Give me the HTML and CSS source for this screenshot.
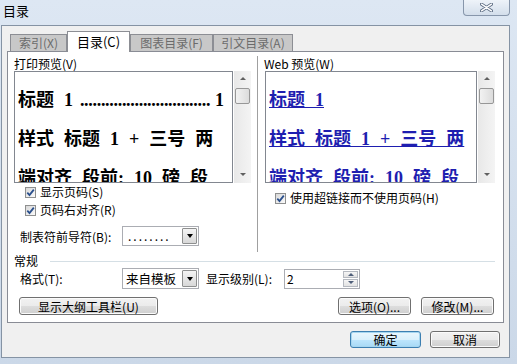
FILE: index.html
```html
<!DOCTYPE html>
<html lang="zh-CN">
<head>
    <meta charset="UTF-8">
    <title>目录</title>
    <link rel="stylesheet" href="styles.css">
</head>
<body>

<div class="window">
    <div class="titlebar">
        <span class="title">目录</span>
        <div class="close-btn">
            <svg width="13" height="9" viewBox="0 0 13 9">
                <path d="M1.5 1.2 L11.5 7.8 M11.5 1.2 L1.5 7.8" stroke="#5b6b82" stroke-width="3.2" stroke-linecap="round"/>
                <path d="M1.5 1.2 L11.5 7.8 M11.5 1.2 L1.5 7.8" stroke="#fff" stroke-width="1.5" stroke-linecap="round"/>
            </svg>
        </div>
    </div>

    <div class="client">
        <div class="tabs">
            <div class="tab tab-index">索引(X)</div>
            <div class="tab tab-toc active">目录(C)</div>
            <div class="tab tab-figures">图表目录(F)</div>
            <div class="tab tab-cites">引文目录(A)</div>
        </div>

        <div class="tab-page">
            <div class="previews">
                <!-- 打印预览 -->
                <div class="preview-col print-col">
                    <div class="label">打印预览(V)</div>
                    <div class="preview-box">
                        <div class="preview-text">
                            <div class="toc-line"><span>标题 1</span><span class="dots">...............................</span><span>1</span></div>
                            <div>样式 标题 1 + 三号 两</div>
                            <div>端对齐 段前: 10 磅 段</div>
                        </div>
                        <div class="scrollbar">
                            <span class="arrow-up"></span>
                            <span class="thumb"></span>
                            <span class="arrow-down"></span>
                        </div>
                    </div>
                    <div class="check"><span class="check-box"><svg width="9" height="9" viewBox="0 0 9 9"><path d="M1.3 4.6 L3.5 7 L7.8 1.6" fill="none" stroke="#2a4f8c" stroke-width="1.8"/></svg></span>显示页码(S)</div>
                    <div class="check"><span class="check-box"><svg width="9" height="9" viewBox="0 0 9 9"><path d="M1.3 4.6 L3.5 7 L7.8 1.6" fill="none" stroke="#2a4f8c" stroke-width="1.8"/></svg></span>页码右对齐(R)</div>
                    <div class="field-row leader-row">
                        <span class="field-label">制表符前导符(B):</span>
                        <div class="combo"><span class="combo-value leader-dots">........</span><span class="drop-btn"></span></div>
                    </div>
                </div>

                <div class="vsep"></div>

                <!-- Web 预览 -->
                <div class="preview-col web-col">
                    <div class="label">Web 预览(W)</div>
                    <div class="preview-box">
                        <div class="preview-text web-text">
                            <div><a>标题 1</a></div>
                            <div><a>样式 标题 1 + 三号 两</a></div>
                            <div><a>端对齐 段前: 10 磅 段</a></div>
                        </div>
                        <div class="scrollbar">
                            <span class="arrow-up"></span>
                            <span class="thumb"></span>
                            <span class="arrow-down"></span>
                        </div>
                    </div>
                    <div class="check"><span class="check-box"><svg width="9" height="9" viewBox="0 0 9 9"><path d="M1.3 4.6 L3.5 7 L7.8 1.6" fill="none" stroke="#2a4f8c" stroke-width="1.8"/></svg></span>使用超链接而不使用页码(H)</div>
                </div>
            </div>

            <!-- 常规 -->
            <div class="group-title"><span>常规</span><span class="group-line"></span></div>
            <div class="field-row format-row">
                <span class="field-label">格式(T):</span>
                <div class="combo"><span class="combo-value">来自模板</span><span class="drop-btn"></span></div>
                <span class="level-label">显示级别(L):</span>
                <div class="spin">
                    <span class="spin-value">2</span>
                    <span class="spin-btns"><span class="spin-up"></span><span class="spin-down"></span></span>
                </div>
            </div>
            <div class="button-row">
                <button class="btn outline-btn">显示大纲工具栏(U)</button>
                <span class="spacer"></span>
                <button class="btn small-btn">选项(O)...</button>
                <button class="btn small-btn">修改(M)...</button>
            </div>
        </div>

        <div class="dialog-buttons">
            <button class="btn dialog-btn default">确定</button>
            <button class="btn dialog-btn">取消</button>
        </div>
    </div>
</div>

</body>
</html>
```

FILE: styles.css
```css
/* Alap */
* {
    box-sizing: border-box;
}

body {
    margin: 0;
    font-family: "Noto Sans CJK SC", sans-serif;
    font-size: 12px;
    color: #000;
}

.window {
    width: 517px;
    height: 364px;
    background: linear-gradient(#dde7f3, #cbd8e8);
    display: flex;
    flex-direction: column;
    overflow: hidden;
}

/* Címsor */
.titlebar {
    height: 25px;
    display: flex;
    justify-content: space-between;
    align-items: flex-start;
}

.title {
    font-size: 13px;
    line-height: 14px;
    margin: 4px 0 0 3px;
}

.close-btn {
    width: 47px;
    height: 16px;
    margin-right: 7px;
    border: 1px solid #8796ab;
    border-top: none;
    border-radius: 0 0 4px 4px;
    background: linear-gradient(#eef3f9, #d3deeb);
    display: flex;
    align-items: center;
    justify-content: center;
}

/* Kliens terület */
.client {
    margin: 0 7px 0 1px;
    height: 333px;
    border: 1px solid #8593a4;
    background: #f0f0f0;
    padding-top: 5px;
    display: flex;
    flex-direction: column;
}

.tabs {
    display: flex;
    align-items: flex-end;
    height: 20px;
    margin-left: 8px;
}

.tab {
    height: 17px;
    border: 1px solid #8c8e94;
    border-bottom: none;
    background: #c8c8c8;
    color: #6b6b6b;
    line-height: 15px;
    text-align: center;
}

.tab-index { width: 57px; }
.tab-toc { width: 63px; }
.tab-figures { width: 83px; }
.tab-cites { width: 80px; }

.tab.active {
    height: 21px;
    margin-bottom: -1px;
    background: #fff;
    color: #000;
    font-size: 13px;
    line-height: 19px;
    position: relative;
}

.tab-page {
    margin: 0 5px;
    height: 272px;
    border: 1px solid #898c95;
    background: #fff;
    display: flex;
    flex-direction: column;
}

/* Előnézetek */
.previews {
    display: flex;
    height: 202px;
    padding: 4px 8px 0 6px;
}

.print-col {
    width: 237px;
}

.web-col {
    width: 231px;
}

.vsep {
    width: 1px;
    margin: 0 6px 2px 6px;
    background: #a0a0a0;
}

.label {
    height: 15px;
    line-height: 15px;
}

.preview-box {
    display: flex;
    height: 112px;
}

.web-col .preview-box {
    margin-left: 1px;
}

.preview-text {
    flex: 1;
    border: 1px solid #828790;
    background: #fff;
    overflow: hidden;
    padding: 9px 8px 0 3px;
    font-family: "Liberation Serif", "Noto Sans CJK SC", serif;
    font-weight: bold;
    font-size: 18px;
    line-height: 39px;
    white-space: nowrap;
    word-spacing: 5.5px;
}

.toc-line {
    display: flex;
    justify-content: space-between;
}

.dots {
    word-spacing: 0;
    letter-spacing: -0.3px;
    margin-left: 2px;
}

.web-text a {
    color: #1e1eb0;
    text-decoration: underline;
    text-decoration-thickness: 1px;
}

.scrollbar {
    width: 17px;
    margin-left: 1px;
    background: linear-gradient(90deg, #e8e8e8, #f4f4f4);
    display: flex;
    flex-direction: column;
    align-items: center;
}

.arrow-up,
.arrow-down {
    width: 0;
    height: 0;
    border-left: 3px solid transparent;
    border-right: 3px solid transparent;
}

.arrow-up {
    margin-top: 6px;
    border-bottom: 3px solid #606060;
}

.arrow-down {
    margin-top: auto;
    margin-bottom: 7px;
    border-top: 3px solid #606060;
}

.thumb {
    width: 15px;
    height: 16px;
    margin-top: 8px;
    border: 1px solid #979797;
    border-radius: 2px;
    background: linear-gradient(90deg, #f2f2f2, #dcdcdc);
}

.check {
    display: flex;
    align-items: center;
    height: 18px;
    line-height: 14px;
    padding-left: 11px;
    gap: 4px;
}

.print-col .check:first-of-type,
.web-col .check {
    margin-top: 6px;
}

.check-box {
    width: 11px;
    height: 11px;
    border: 1px solid #8e8f8f;
    background: linear-gradient(135deg, #d8d8d8, #fbfbfb);
    display: flex;
    align-items: center;
    justify-content: center;
}

/* Mezők */
.field-row {
    display: flex;
    align-items: center;
}

.leader-row {
    margin-top: 7px;
    height: 20px;
}

.leader-row .field-label {
    width: 108px;
    padding-left: 6px;
}

.combo {
    width: 77px;
    height: 20px;
    border: 1px solid #abadb3;
    background: #fff;
    display: flex;
    align-items: stretch;
}

.combo-value {
    flex: 1;
    line-height: 18px;
    padding-left: 3px;
}

.leader-dots {
    letter-spacing: 2px;
    padding-left: 5px;
}

.drop-btn {
    width: 15px;
    margin: 1px;
    border: 1px solid #8e8f8f;
    border-radius: 1px;
    background: linear-gradient(#f4f4f4, #d8d8d8);
    display: flex;
    align-items: center;
    justify-content: center;
}

.drop-btn::after {
    content: "";
    width: 0;
    height: 0;
    border-left: 3.5px solid transparent;
    border-right: 3.5px solid transparent;
    border-top: 4px solid #000;
}

.group-title {
    display: flex;
    align-items: center;
    height: 14px;
    line-height: 14px;
    padding: 0 8px 0 6px;
}

.group-line {
    flex: 1;
    height: 1px;
    margin-left: 12px;
    background: #d5dfe5;
}

.format-row {
    height: 21px;
    padding-left: 12px;
}

.format-row .field-label {
    width: 102px;
}

.format-row .combo {
    height: 21px;
}

.format-row .combo-value {
    line-height: 19px;
    font-size: 12.5px;
}

.level-label {
    width: 78px;
    margin-left: 7px;
}

.spin {
    width: 76px;
    height: 20px;
    border: 1px solid #abadb3;
    background: #fff;
    display: flex;
}

.spin-value {
    flex: 1;
    line-height: 18px;
    padding-left: 2px;
}

.spin-btns {
    width: 15px;
    margin: 1px;
    display: flex;
    flex-direction: column;
    gap: 1px;
}

.spin-up,
.spin-down {
    flex: 1;
    border: 1px solid #b5b9c0;
    background: linear-gradient(#f6f6f6, #e2e2e2);
    display: flex;
    align-items: center;
    justify-content: center;
}

.spin-up::after,
.spin-down::after {
    content: "";
    width: 0;
    height: 0;
    border-left: 3px solid transparent;
    border-right: 3px solid transparent;
}

.spin-up::after {
    border-bottom: 3px solid #4f5f7a;
}

.spin-down::after {
    border-top: 3px solid #4f5f7a;
}

.button-row {
    display: flex;
    margin-top: 8px;
    height: 18px;
    padding: 0 9px 0 11px;
    gap: 10px;
}

.spacer {
    flex: 1;
}

/* Gombok */
.btn {
    height: 18px;
    padding: 0;
    border: 1px solid #707070;
    border-radius: 3px;
    background: linear-gradient(#f2f2f2 0%, #ebebeb 50%, #dddddd 51%, #cfcfcf 100%);
    box-shadow: inset 0 0 0 1px #fbfbfb;
    font-family: "Noto Sans CJK SC", sans-serif;
    font-size: 12px;
    line-height: 15px;
    color: #000;
}

.outline-btn {
    width: 139px;
}

.small-btn:first-of-type {
    width: 72px;
}

.small-btn {
    width: 73px;
}

.dialog-buttons {
    display: flex;
    justify-content: flex-end;
    gap: 9px;
    margin-top: 8px;
    padding-right: 9px;
}

.dialog-btn {
    width: 70px;
    height: 17px;
}

.dialog-btn.default {
    width: 71px;
    border-color: #3c7fb1;
    box-shadow: inset 0 0 0 1px #a6d6f0;
    background: linear-gradient(#eaf6fd 0%, #d9f0fc 50%, #bee6fd 51%, #a7d9f5 100%);
}
```
